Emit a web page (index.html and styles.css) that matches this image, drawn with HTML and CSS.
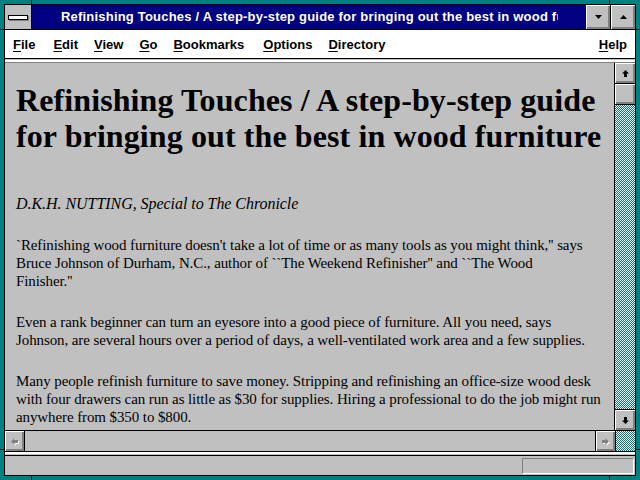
FILE: index.html
```html
<!DOCTYPE html>
<html lang="en">
<head>
  <meta charset="UTF-8">
  <title>Netscape - Refinishing Touches</title>
  <link rel="stylesheet" href="styles.css">
</head>
<body>
  <div class="window">
    <!-- frame corner ticks -->
    <span class="tick tick-tl-h"></span>
    <span class="tick tick-tl-v"></span>
    <span class="tick tick-tr-v"></span>
    <span class="tick tick-tr-h"></span>
    <span class="tick tick-bl-h"></span>
    <span class="tick tick-bl-v"></span>
    <span class="tick tick-br-v"></span>
    <span class="tick tick-br-h"></span>

    <div class="frame">
      <div class="titlebar">
        <div class="sysmenu"><span class="sysbar"></span></div>
        <div class="title"><span class="title-text">Refinishing Touches / A step-by-step guide for bringing out the best in wood furniture</span></div>
        <div class="winbtn">
          <svg width="9" height="5" viewBox="0 0 9 5"><polygon points="1,0 8,0 4.5,4" fill="#000"/></svg>
        </div>
        <div class="winbtn">
          <svg width="9" height="5" viewBox="0 0 9 5"><polygon points="1,4 8,4 4.5,0" fill="#000"/></svg>
        </div>
      </div>

      <div class="menubar">
        <span class="menu-item file"><u>F</u>ile</span>
        <span class="menu-item"><u>E</u>dit</span>
        <span class="menu-item"><u>V</u>iew</span>
        <span class="menu-item"><u>G</u>o</span>
        <span class="menu-item bookmarks"><u>B</u>ookmarks</span>
        <span class="menu-item"><u>O</u>ptions</span>
        <span class="menu-item"><u>D</u>irectory</span>
        <span class="menu-item help"><u>H</u>elp</span>
      </div>

      <div class="edge"></div>

      <div class="viewport">
        <div class="page">
          <h1>Refinishing Touches / A step-by-step guide<br>for bringing out the best in wood furniture</h1>
          <p class="byline">D.K.H. NUTTING, Special to The Chronicle</p>
          <p>`Refinishing wood furniture doesn't take a lot of time or as many tools as you might think,'' says<br>Bruce Johnson of Durham, N.C., author of ``The Weekend Refinisher'' and ``The Wood<br>Finisher.''</p>
          <p>Even a rank beginner can turn an eyesore into a good piece of furniture. All you need, says<br>Johnson, are several hours over a period of days, a well-ventilated work area and a few supplies.</p>
          <p>Many people refinish furniture to save money. Stripping and refinishing an office-size wood desk<br>with four drawers can run as little as $30 for supplies. Hiring a professional to do the job might run<br>anywhere from $350 to $800.</p>
        </div>
        <div class="vscroll">
          <div class="sbtn">
            <svg width="9" height="9" viewBox="0 0 9 9"><polygon points="4.5,1 8,4.5 6,4.5 6,8 3,8 3,4.5 1,4.5" fill="#000"/></svg>
          </div>
          <div class="thumb"></div>
          <div class="track"></div>
          <div class="sbtn">
            <svg width="9" height="9" viewBox="0 0 9 9"><polygon points="3,1 6,1 6,4.5 8,4.5 4.5,8 1,4.5 3,4.5" fill="#000"/></svg>
          </div>
        </div>
      </div>

      <div class="hscroll-row">
        <div class="sbtn sbtn-left">
          <svg width="9" height="9" viewBox="0 0 9 9"><polygon points="2,5.5 5.5,2 5.5,4 9,4 9,7 5.5,7 5.5,9" fill="#fff"/><polygon points="1,4.5 4.5,1 4.5,3 8,3 8,6 4.5,6 4.5,8" fill="#808080"/></svg>
        </div>
        <div class="htrack"></div>
        <div class="sbtn sbtn-right">
          <svg width="9" height="9" viewBox="0 0 9 9"><polygon points="9,5.5 5.5,2 5.5,4 2,4 2,7 5.5,7 5.5,9" fill="#fff"/><polygon points="8,4.5 4.5,1 4.5,3 1,3 1,6 4.5,6 4.5,8" fill="#808080"/></svg>
        </div>
        <div class="corner"></div>
      </div>

      <div class="sep"></div>

      <div class="status">
        <div class="status-box"></div>
      </div>
    </div>
  </div>
</body>
</html>
```

FILE: styles.css
```css
* {
  margin: 0;
  padding: 0;
  box-sizing: border-box;
}

body {
  background-color: #008080;
  font-family: "Liberation Sans", Arial, sans-serif;
}

/* Window frame */
.window {
  position: relative;
  width: 640px;
  height: 480px;
  border: 4px solid #008080;
}

.frame {
  height: 100%;
  border: 1px solid #000;
  display: flex;
  flex-direction: column;
  background-color: #c0c0c0;
}

.tick {
  position: absolute;
  background-color: #000;
}

.tick-tl-h, .tick-bl-h { left: -4px; width: 4px; height: 1px; }
.tick-tr-h, .tick-br-h { right: -4px; width: 4px; height: 1px; }
.tick-tl-h, .tick-tr-h { top: 25px; }
.tick-bl-h, .tick-br-h { bottom: 26px; }
.tick-tl-v, .tick-tr-v { top: -4px; width: 1px; height: 4px; }
.tick-bl-v, .tick-br-v { bottom: -4px; width: 1px; height: 4px; }
.tick-tl-v, .tick-bl-v { left: 27px; }
.tick-tr-v, .tick-br-v { right: 26px; }

/* Title bar */
.titlebar {
  display: flex;
  height: 25px;
  background-color: #000080;
  border-bottom: 1px solid #000;
}

.sysmenu {
  width: 27px;
  background-color: #c0c0c0;
  border-right: 1px solid #000;
  display: flex;
  align-items: center;
  justify-content: center;
}

.sysbar {
  width: 20px;
  height: 5px;
  background-color: #fff;
  border: 1px solid #000;
  box-shadow: 1px 1px 0 #808080;
}

.title {
  flex: 1;
  min-width: 0;
  padding: 0 27px 0 29px;
  color: white;
  font-weight: bold;
  font-size: 13px;
  letter-spacing: 0.2px;
  line-height: 24px;
}

.title-text {
  display: block;
  overflow: hidden;
  white-space: nowrap;
}

.winbtn {
  width: 25px;
  border-left: 1px solid #000;
  background-color: #c0c0c0;
  box-shadow: inset 1px 1px 0 #fff, inset -2px -2px 0 #808080;
  display: flex;
  align-items: center;
  justify-content: center;
}

/* Menu bar */
.menubar {
  display: flex;
  align-items: center;
  height: 29px;
  background-color: white;
  border-bottom: 1px solid #000;
  font-weight: bold;
  font-size: 13px;
}

.menu-item {
  padding: 0 8px;
}

.menu-item u {
  text-underline-offset: 2px;
}

.file {
  margin-right: 2px;
}

.bookmarks {
  margin-right: 3px;
}

.help {
  margin-left: auto;
}

.edge {
  height: 4px;
  background: linear-gradient(#c0c0c0 0 1px, #fff 1px 3px, #808080 3px 4px);
}

/* Document area */
.viewport {
  flex: 1;
  display: flex;
  min-height: 0;
}

.page {
  flex: 1;
  overflow: hidden;
  padding: 19px 0 0 11px;
  font-family: "Liberation Serif", "Times New Roman", serif;
  font-size: 15px;
  letter-spacing: -0.1px;
  line-height: 18px;
  color: #000;
  white-space: nowrap;
}

.page h1 {
  font-size: 32px;
  letter-spacing: 0.1px;
  line-height: 36px;
  font-weight: bold;
}

.byline {
  font-style: italic;
  font-size: 16px;
  letter-spacing: -0.05px;
  margin-top: 41px;
  margin-bottom: 19px;
}

.page p {
  margin-bottom: 23px;
}

/* Scrollbars */
.vscroll {
  width: 21px;
  border-left: 1px solid #000;
  display: flex;
  flex-direction: column;
}

.sbtn {
  height: 20px;
  width: 20px;
  background-color: #c0c0c0;
  box-shadow: inset 1px 1px 0 #fff, inset -2px -2px 0 #808080;
  display: flex;
  align-items: center;
  justify-content: center;
  flex-shrink: 0;
}

.vscroll .sbtn:first-child {
  border-bottom: 1px solid #000;
  height: 21px;
}

.vscroll .sbtn:last-child {
  border-top: 1px solid #000;
  height: 21px;
}

.thumb {
  height: 21px;
  background-color: #c0c0c0;
  border-bottom: 1px solid #000;
  box-shadow: inset 1px 1px 0 #fff, inset -2px -2px 0 #808080;
}

.track,
.corner {
  flex: 1;
  background: repeating-conic-gradient(#008080 0 25%, #fff 0 50%) 0 0 / 2px 2px;
}

.hscroll-row {
  display: flex;
  height: 22px;
  border-top: 1px solid #000;
  border-bottom: 1px solid #000;
}

.hscroll-row .sbtn {
  height: 20px;
}

.sbtn-left {
  border-right: 1px solid #000;
  width: 20px;
}

.sbtn-right {
  border-left: 1px solid #000;
  width: 20px;
}

.htrack {
  flex: 1;
  background-color: #c0c0c0;
}

.corner {
  flex: 0 0 20px;
  border-left: 1px solid #000;
}

.sep {
  height: 4px;
  background: linear-gradient(#fff 0 2px, #c0c0c0 2px 3px, #000 3px 4px);
}

/* Status bar */
.status {
  flex: 0 0 19px;
  display: flex;
  justify-content: flex-end;
  padding: 2px 1px 1px 0;
}

.status-box {
  width: 112px;
  border-top: 1px solid #808080;
  border-left: 1px solid #808080;
  border-bottom: 1px solid #fff;
  border-right: 1px solid #fff;
}
```
